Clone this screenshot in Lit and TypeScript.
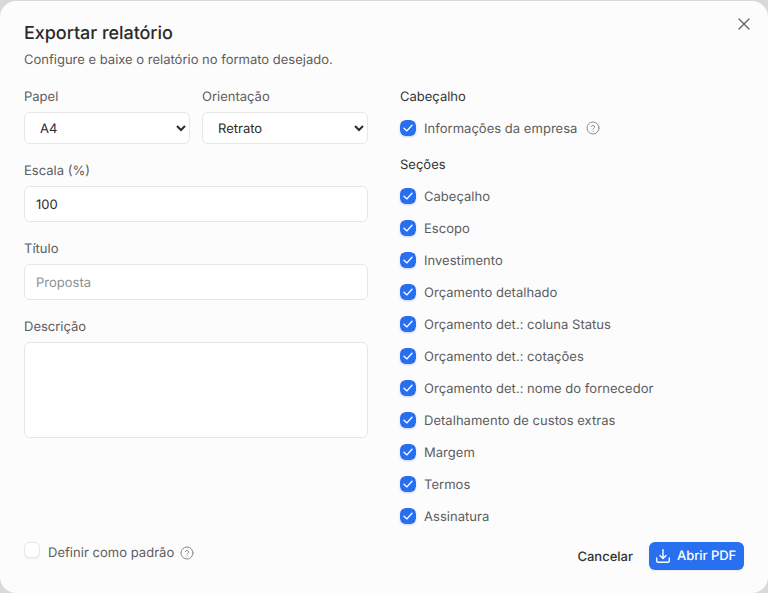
import { LitElement, html, css, svg } from "lit";
import { customElement } from "lit/decorators.js";

const sections = [
  "Cabeçalho",
  "Escopo",
  "Investimento",
  "Orçamento detalhado",
  "Orçamento det.: coluna Status",
  "Orçamento det.: cotações",
  "Orçamento det.: nome do fornecedor",
  "Detalhamento de custos extras",
  "Margem",
  "Termos",
  "Assinatura",
];

const help = html`<svg class="help" viewBox="0 0 14 14" fill="none" stroke="currentColor" stroke-width="1" stroke-linecap="round" stroke-linejoin="round">
  <circle cx="7" cy="7" r="6"></circle>
  <path d="M5.4 5.5a1.65 1.65 0 0 1 3.2.5c0 1.1-1.6 1.4-1.6 2.2"></path>
  <path d="M7 10.1v.05"></path>
</svg>`;

const tick = svg`<path d="M4 8.3 6.9 10.9 12 5.3" fill="none" stroke="#fff" stroke-width="1.3" stroke-linecap="round" stroke-linejoin="round"></path>`;

@customElement("app-root")
export class AppRoot extends LitElement {
  static styles = css`
    :host {
      display: block;
      width: 768px;
      height: 593px;
      background: #d9d9d9;
      font-family: Inter, "Noto Sans", sans-serif;
      text-rendering: geometricPrecision;
      overflow: hidden;
    }
    * { box-sizing: border-box; }
    .dialog {
      position: relative;
      height: 592px;
      margin-top: 1px;
      background: #fcfcfc;
      border-radius: 16px;
      padding: 21px 24px 0;
      display: flex;
      flex-direction: column;
    }
    .close {
      position: absolute;
      top: 15px;
      right: 16px;
      width: 16px;
      height: 16px;
      color: #5c5c5c;
    }
    h1 {
      margin: 0;
      font-size: 18px;
      line-height: 24px;
      font-weight: 500;
      color: #2b2b2b;
      letter-spacing: -0.05px;
    }
    .sub {
      margin: 3px 0 0;
      font-size: 13px;
      line-height: 22px;
      color: #5c5c5c;
    }
    .body {
      display: grid;
      grid-template-columns: 344px 344px;
      gap: 32px;
      margin-top: 16px;
    }
    .left { display: flex; flex-direction: column; gap: 17px; }
    .row { display: grid; grid-template-columns: 166px 166px; gap: 12px; }
    .field { display: flex; flex-direction: column; gap: 5px; }
    label.l {
      font-size: 13px;
      line-height: 20px;
      height: 20px;
      color: #5c5c5c;
    }
    select, input, textarea {
      font-family: inherit;
      font-size: 13px;
      color: #2b2b2b;
      background: #fff;
      border: 1px solid #e6e6e6;
      border-radius: 6px;
      width: 100%;
      outline: none;
      text-rendering: geometricPrecision;
    }
    select { height: 32px; padding: 2px 11px 0; }
    input { height: 36px; padding: 2px 11px 0; }
    input::placeholder { color: #8f8f8f; opacity: 1; }
    textarea { height: 96px; resize: none; display: block; }
    .right { display: flex; flex-direction: column; }
    .head {
      font-size: 13px;
      line-height: 20px;
      height: 20px;
      color: #333;
    }
    .list { display: flex; flex-direction: column; gap: 8px; margin-top: 9px; }
    .list + .head { margin-top: 15px; }
    .check {
      display: flex;
      align-items: center;
      gap: 8px;
      height: 24px;
      font-size: 13px;
      color: #5c5c5c;
      letter-spacing: 0.03px;
    }
    .check span.t { margin-top: 2px; }
    .box {
      width: 16px;
      height: 16px;
      flex: none;
      display: block;
      border-radius: 5.5px;
      box-shadow: 0 1px 2px rgba(41, 112, 240, 0.25);
    }
    .help { width: 14px; height: 14px; color: #8c8c8c; margin-left: 1px; flex: none; }
    .empty {
      width: 16px;
      height: 16px;
      flex: none;
      border-radius: 5.5px;
      background: #fff;
      border: 1px solid #e6e6e6;
      box-shadow: 0 1px 1px rgba(0, 0, 0, 0.05);
    }
    .foot {
      position: absolute;
      left: 24px;
      right: 24px;
      bottom: 23px;
      display: flex;
      justify-content: space-between;
      align-items: flex-end;
    }
    .default { margin-bottom: 5px; }
    .default span.t { margin-top: 0; }
    .default .empty { margin-top: -6px; }
    .default .help { margin-left: -2px; }
    .actions { display: flex; align-items: center; gap: 16px; }
    .cancel { font-size: 13px; font-weight: 500; color: #333; margin-top: 2px; }
    .primary {
      display: flex;
      align-items: center;
      gap: 7px;
      height: 28px;
      width: 95px;
      padding: 0 0 0 7px;
      background: #2970f0;
      color: #fff;
      border-radius: 6px;
      font-size: 13px;
      font-weight: 500;
      letter-spacing: -0.05px;
      box-shadow: 0 1px 2px rgba(0, 0, 0, 0.08);
    }
    .primary svg { width: 14px; height: 14px; flex: none; }
  `;

  private box() {
    return html`<svg class="box" viewBox="0 0 16 16"><rect width="16" height="16" rx="5.5" fill="#2970f0"></rect>${tick}</svg>`;
  }

  render() {
    return html`
      <div class="dialog">
        <svg class="close" viewBox="0 0 16 16" fill="none" stroke="currentColor" stroke-width="1.2" stroke-linecap="round">
          <path d="M3 3l10 10M13 3 3 13"></path>
        </svg>
        <h1>Exportar relatório</h1>
        <p class="sub">Configure e baixe o relatório no formato desejado.</p>
        <div class="body">
          <div class="left">
            <div class="row">
              <div class="field">
                <label class="l">Papel</label>
                <select><option>A4</option></select>
              </div>
              <div class="field">
                <label class="l">Orientação</label>
                <select><option>Retrato</option></select>
              </div>
            </div>
            <div class="field">
              <label class="l">Escala (%)</label>
              <input value="100" />
            </div>
            <div class="field">
              <label class="l">Título</label>
              <input placeholder="Proposta" />
            </div>
            <div class="field">
              <label class="l">Descrição</label>
              <textarea></textarea>
            </div>
          </div>
          <div class="right">
            <div class="head">Cabeçalho</div>
            <div class="list">
              <div class="check">${this.box()}<span class="t">Informações da empresa</span>${help}</div>
            </div>
            <div class="head">Seções</div>
            <div class="list">
              ${sections.map((s) => html`<div class="check">${this.box()}<span class="t">${s}</span></div>`)}
            </div>
          </div>
        </div>
        <div class="foot">
          <div class="check default"><span class="empty"></span><span class="t">Definir como padrão</span>${help}</div>
          <div class="actions">
            <span class="cancel">Cancelar</span>
            <div class="primary">
              <svg viewBox="0 0 14 14" fill="none" stroke="currentColor" stroke-width="1.4" stroke-linecap="round" stroke-linejoin="round">
                <path d="M7 .7v8.6M4 6.4l3 3 3-3"></path>
                <path d="M.7 9v2.8c0 .8.7 1.5 1.5 1.5h9.6c.8 0 1.5-.7 1.5-1.5V9"></path>
              </svg>
              <span>Abrir PDF</span>
            </div>
          </div>
        </div>
      </div>
    `;
  }
}
